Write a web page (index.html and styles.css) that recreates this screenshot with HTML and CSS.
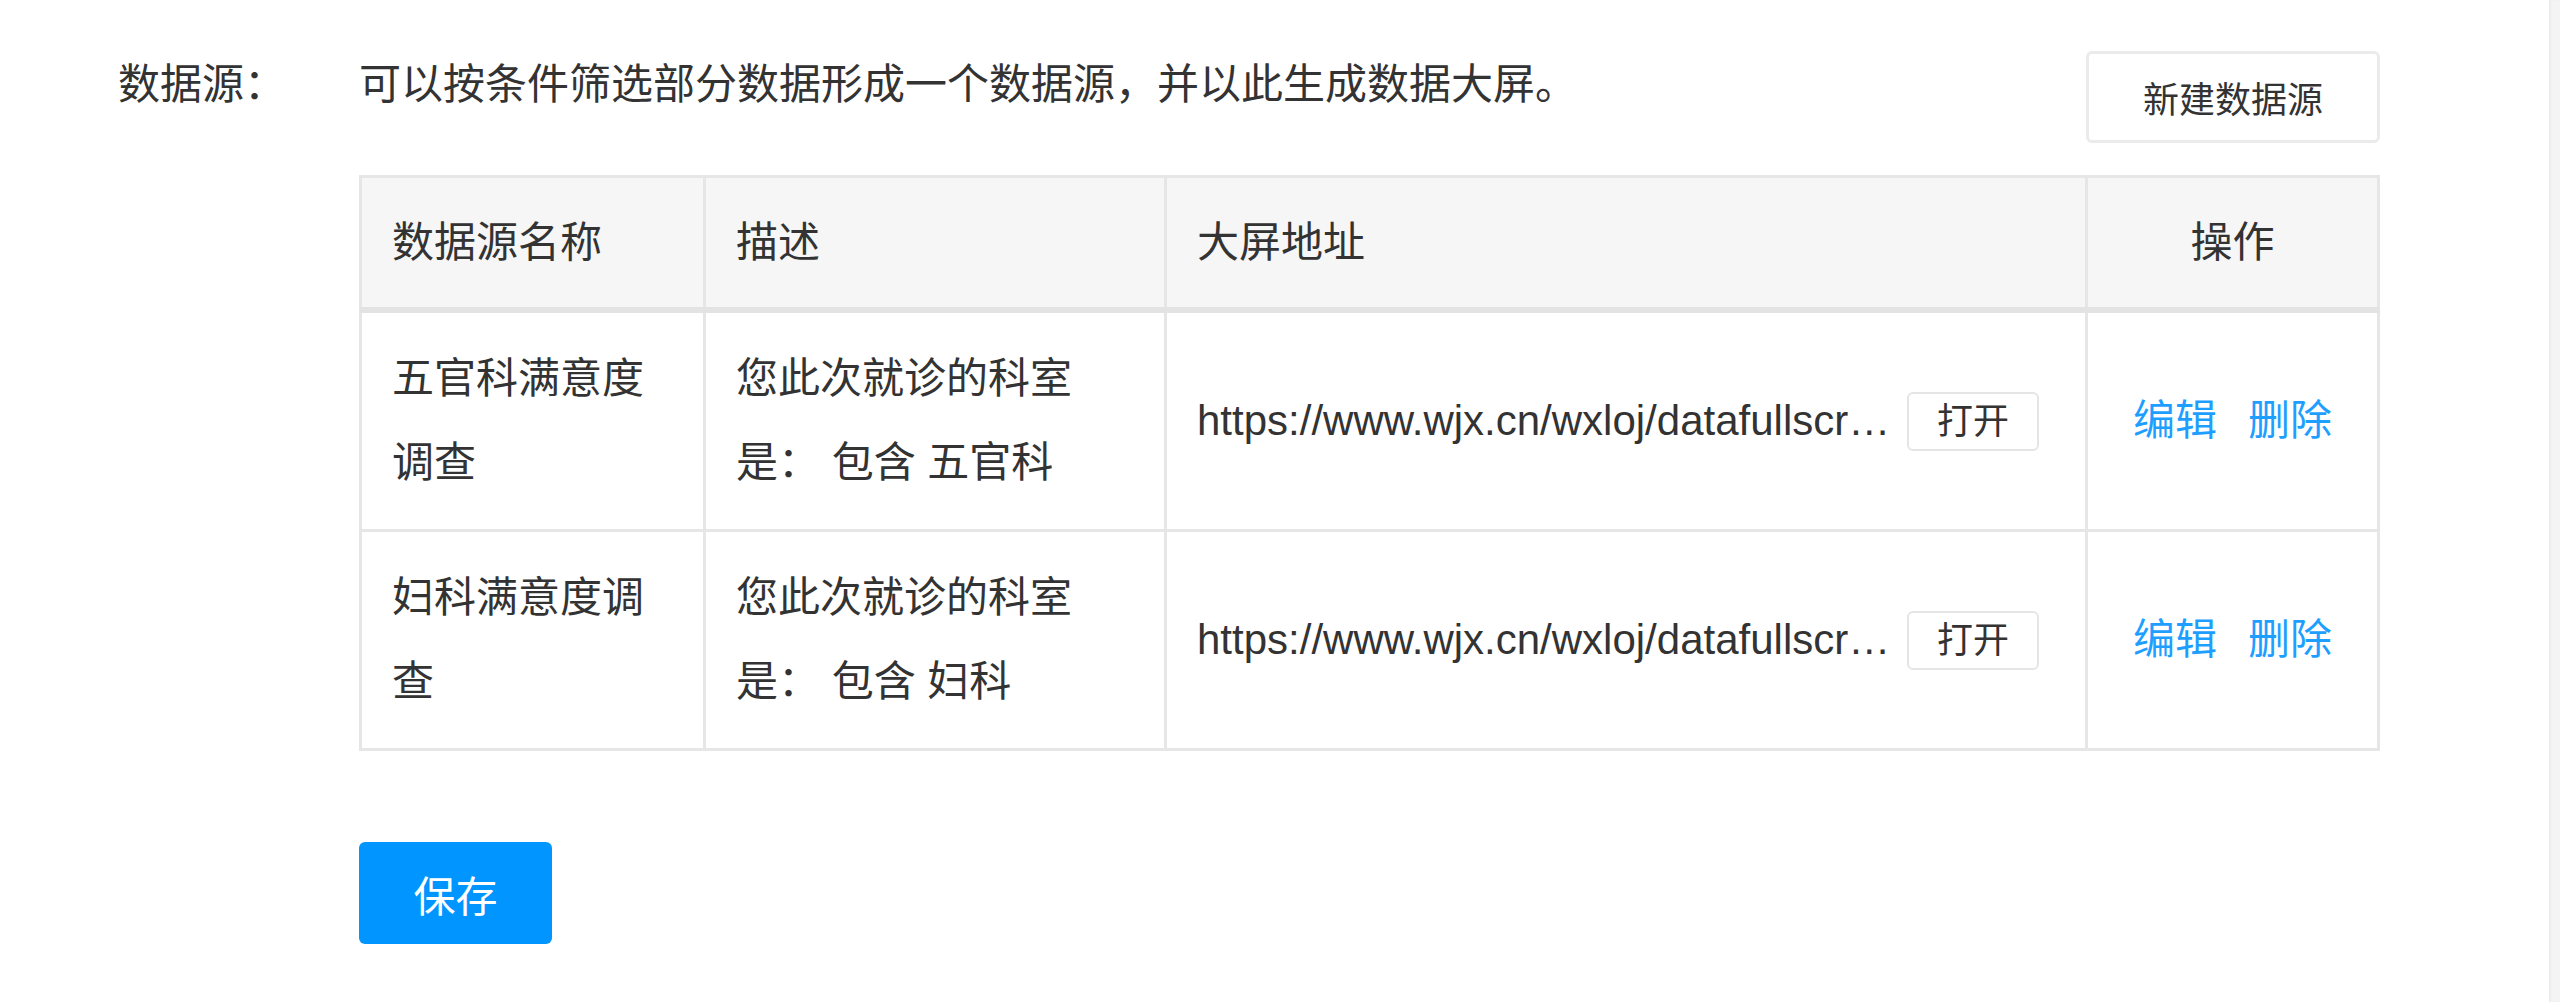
FILE: index.html
```html
<!DOCTYPE html>
<html lang="zh-CN">
<head>
  <meta charset="UTF-8">
  <meta name="viewport" content="width=device-width, initial-scale=1.0">
  <title>数据源</title>
  <link rel="stylesheet" href="styles.css">
</head>
<body>
  <div class="page">
    <div class="main">
      <div class="formRow">
        <div class="formLabel">数据源：</div>
        <div class="formBody">
          <div class="toolbar">
            <p class="tip">可以按条件筛选部分数据形成一个数据源，并以此生成数据大屏。</p>
            <button class="btn btnNew">新建数据源</button>
          </div>
          <table class="dsTable">
            <colgroup>
              <col class="colName">
              <col class="colDesc">
              <col class="colUrl">
              <col class="colOp">
            </colgroup>
            <thead>
              <tr>
                <th>数据源名称</th>
                <th>描述</th>
                <th>大屏地址</th>
                <th class="center">操作</th>
              </tr>
            </thead>
            <tbody>
              <tr>
                <td>五官科满意度调查</td>
                <td>您此次就诊的科室是： 包含 五官科</td>
                <td>
                  <div class="urlCell">
                    <span class="url">https://www.wjx.cn/wxloj/datafullscreen.aspx?activity=238761&amp;ds=1</span>
                    <button class="btn btnOpen">打开</button>
                  </div>
                </td>
                <td>
                  <div class="ops"><a href="#">编辑</a><a href="#">删除</a></div>
                </td>
              </tr>
              <tr>
                <td>妇科满意度调查</td>
                <td>您此次就诊的科室是： 包含 妇科</td>
                <td>
                  <div class="urlCell">
                    <span class="url">https://www.wjx.cn/wxloj/datafullscreen.aspx?activity=238761&amp;ds=2</span>
                    <button class="btn btnOpen">打开</button>
                  </div>
                </td>
                <td>
                  <div class="ops"><a href="#">编辑</a><a href="#">删除</a></div>
                </td>
              </tr>
            </tbody>
          </table>
          <button class="btn btnSave">保存</button>
        </div>
      </div>
    </div>
    <div class="track"></div>
  </div>
</body>
</html>
```

FILE: styles.css
```css
html, body{
  margin: 0;
  padding: 0;
  background: #fff;
}
body{
  font-family: "Liberation Sans", "Noto Sans CJK SC", sans-serif;
  font-size: 42px;
  color: #333;
}
.page{
  display: flex;
  min-height: 100vh;
}
.main{
  flex: 1;
  padding: 43px 169px 0 118px;
}
.track{
  width: 12px;
  background: #f4f4f4;
  box-shadow: inset 2px 0 2px rgba(0, 0, 0, 0.03);
}
.formRow{
  display: flex;
}
.formLabel{
  width: 241px;
  flex: none;
  line-height: 84px;
}
.formBody{
  flex: 1;
  min-width: 0;
}
.toolbar{
  display: flex;
  justify-content: space-between;
  align-items: flex-start;
}
.tip{
  margin: 0;
  line-height: 84px;
}
.btn{
  font-family: inherit;
  color: #333;
  background: #fff;
  cursor: pointer;
}
.btnNew{
  margin-top: 8px;
  width: 294px;
  height: 92px;
  font-size: 36px;
  border: 3px solid #ebebeb;
  border-radius: 6px;
  padding: 0;
}
.dsTable{
  width: 100%;
  margin-top: 32px;
  border-collapse: collapse;
  table-layout: fixed;
  border: 3px solid #e6e6e6;
}
.colName{ width: 344px; }
.colDesc{ width: 461px; }
.colUrl{ width: 921px; }
.colOp{ width: 292px; }
.dsTable th,
.dsTable td{
  border: 3px solid #e6e6e6;
  padding: 24px 30px;
  line-height: 84px;
  text-align: left;
  vertical-align: middle;
  font-weight: normal;
}
.dsTable th{
  background: #f6f6f6;
  padding-top: 23px;
  padding-bottom: 22px;
  border-bottom: 6px solid #e3e3e3;
}
.dsTable .center{
  text-align: center;
}
.urlCell{
  display: flex;
  align-items: center;
}
.url{
  flex: none;
  width: 705px;
  white-space: nowrap;
  overflow: hidden;
  text-overflow: ellipsis;
  color: #333;
}
.btnOpen{
  flex: none;
  margin-left: 5px;
  width: 132px;
  height: 59px;
  padding: 0;
  font-size: 36px;
  line-height: 55px;
  border: 2px solid #e5e5e5;
  border-radius: 6px;
}
.ops{
  display: flex;
  justify-content: center;
  gap: 31px;
}
.ops a{
  color: #1e9fff;
  text-decoration: none;
}
.btnSave{
  display: block;
  margin-top: 91px;
  width: 193px;
  height: 102px;
  padding: 0;
  font-size: 42px;
  color: #fff;
  background: #0095ff;
  border: none;
  border-radius: 6px;
}
```
